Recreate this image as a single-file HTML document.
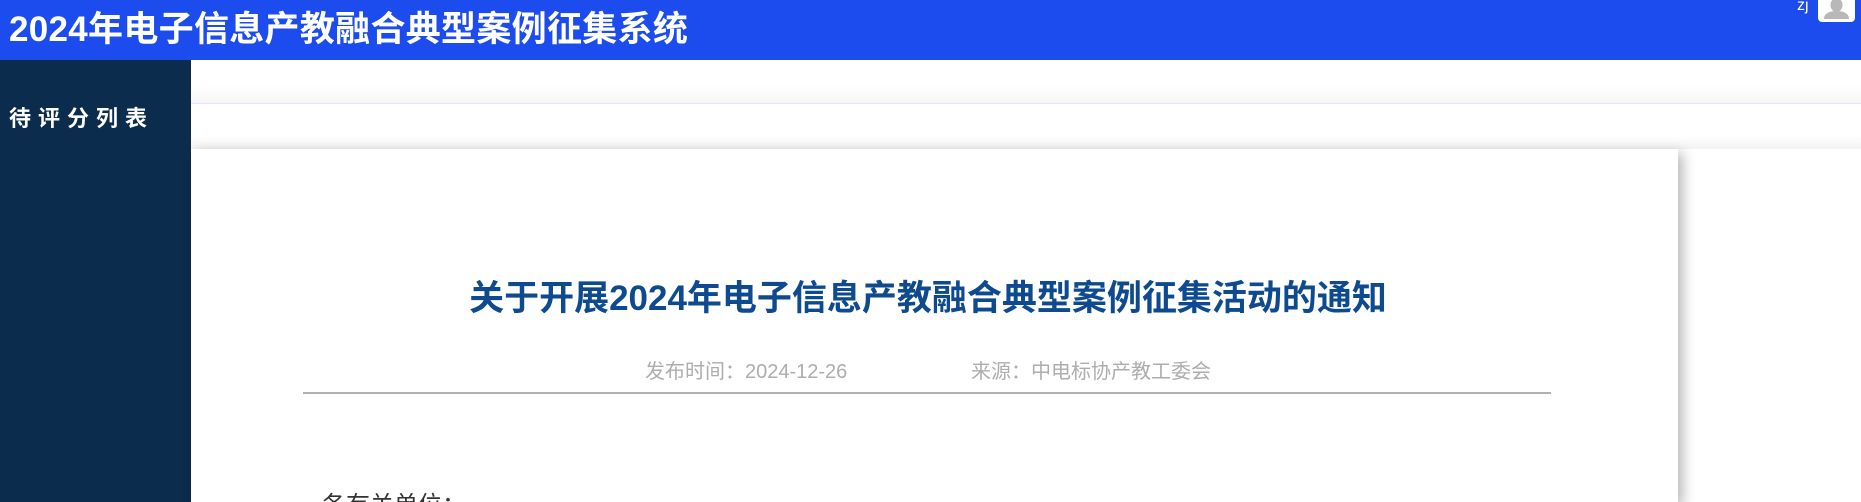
<!DOCTYPE html>
<html><head><meta charset="utf-8">
<style>
*{margin:0;padding:0;box-sizing:border-box}
html,body{width:1861px;height:502px;overflow:hidden;background:#fff;font-family:"Liberation Sans","Noto Sans CJK SC",sans-serif;position:relative}
.hd{position:absolute;left:0;top:0;width:1861px;height:60px;background:#1c4ced}
.hd .t{position:absolute;left:9px;top:8px;font-size:35px;font-weight:bold;color:#fff;line-height:44px;white-space:nowrap;letter-spacing:0.3px}
.user{position:absolute;left:1797px;top:-4px;color:#fff;font-size:16px;line-height:20px}
.av{position:absolute;left:1818px;top:0;width:37px;height:22px;background:#fff;border-radius:0 0 4px 4px;overflow:hidden}
.side{position:absolute;left:0;top:60px;width:191px;height:442px;background:#0b2c4d}
.side .m{position:absolute;left:9px;top:46px;font-size:22px;font-weight:bold;color:#fff;letter-spacing:7px;line-height:26px;white-space:nowrap}
.bar{position:absolute;left:191px;top:60px;width:1670px;height:44px;background:linear-gradient(#fff 60%,#f6f6f8);border-bottom:1px solid #e4e8f4}
.band{position:absolute;left:191px;top:105px;width:1670px;height:44px;background:linear-gradient(#fff 70%,#f3f3f3)}
.card{position:absolute;left:191px;top:149px;width:1487px;height:353px;background:#fff;box-shadow:5px 4px 12px rgba(0,0,0,0.28);overflow:hidden}
.title{position:absolute;left:278px;top:128px;width:918px;text-align:center;font-size:35px;font-weight:bold;color:#0d4a8f;line-height:44px;white-space:nowrap}
.meta{position:absolute;top:210px;font-size:20px;color:#adadad;line-height:26px;white-space:nowrap}
.line{position:absolute;left:112px;top:243px;width:1248px;height:2px;background:#b0b0b0}
.p{position:absolute;left:131px;top:342px;font-size:24px;color:#333;line-height:30px;white-space:nowrap}
</style></head><body>
<div class="hd"><div class="t">2024年电子信息产教融合典型案例征集系统</div>
<div class="user">zj</div>
<div class="av"><svg width="37" height="22" viewBox="0 0 37 22"><path d="M4 0H33V18a2 2 0 0 1-2 2H6a2 2 0 0 1-2-2Z" fill="#fff"/><ellipse cx="18.5" cy="5" rx="6" ry="7" fill="#b8b8b8"/><path d="M6 19c0-6 6-8 12.5-8S31 13 31 19Z" fill="#b8b8b8"/></svg></div>
</div>
<div class="side"><div class="m">待评分列表</div></div>
<div class="bar"></div>
<div class="band"></div>
<div class="card">
<div class="title">关于开展2024年电子信息产教融合典型案例征集活动的通知</div>
<div class="meta" style="left:454px">发布时间：2024-12-26</div>
<div class="meta" style="left:780px">来源：中电标协产教工委会</div>
<div class="line"></div>
<div class="p">各有关单位：</div>
</div>
</body></html>
